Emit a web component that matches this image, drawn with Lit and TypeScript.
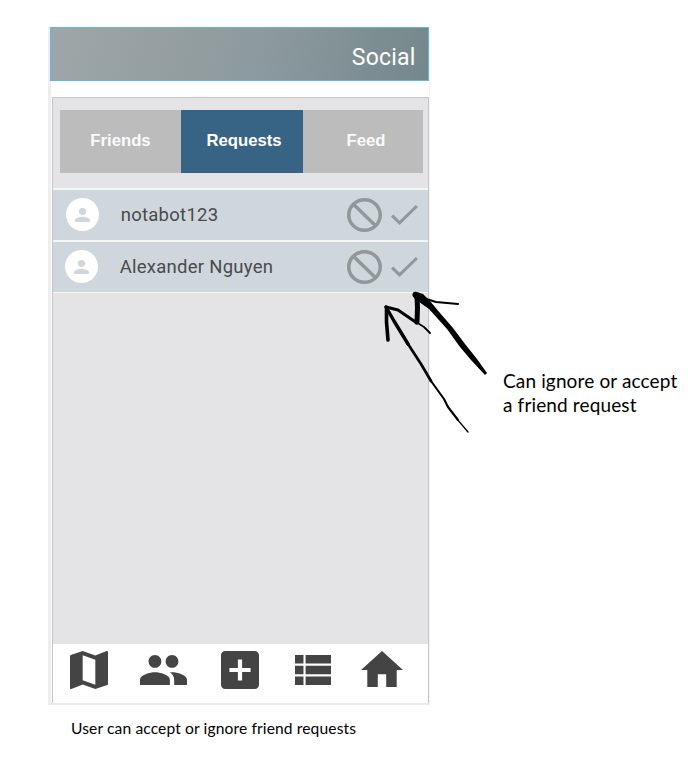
import { LitElement, html, css, svg } from "lit";
import { customElement, property } from "lit/decorators.js";

interface Glyph { box: string; d: string; }

const GLYPHS: Record<string, Glyph> = {
  map: { box: "3 3 18 18", d: "M20.5 3l-.16.03L15 5.1 9 3 3.36 4.9c-.21.07-.36.25-.36.48V20.5c0 .28.22.5.5.5l.16-.03L9 18.9l6 2.1 5.64-1.9c.21-.07.36-.25.36-.48V3.5c0-.28-.22-.5-.5-.5zM15 19l-6-2.11V5l6 2.11V19z" },
  people: { box: "1 5 22 14", d: "M16 11c1.66 0 2.99-1.34 2.99-3S17.66 5 16 5c-1.66 0-3 1.34-3 3s1.34 3 3 3zm-8 0c1.66 0 2.99-1.34 2.99-3S9.66 5 8 5C6.34 5 5 6.34 5 8s1.34 3 3 3zm0 2c-2.33 0-7 1.17-7 3.5V19h14v-2.5c0-2.33-4.67-3.5-7-3.5zm8 0c-.29 0-.62.02-.97.05 1.16.84 1.97 1.97 1.97 3.45V19h6v-2.5c0-2.33-4.67-3.5-7-3.5z" },
  add: { box: "3 3 18 18", d: "M19 3H5c-1.11 0-2 .9-2 2v14c0 1.1.89 2 2 2h14c1.1 0 2-.9 2-2V5c0-1.1-.9-2-2-2zm-2 10h-4v4h-2v-4H7v-2h4V7h2v4h4v2z" },
  list: { box: "4 5 17 14", d: "M4 14h4v-4H4v4zm0 5h4v-4H4v4zM4 9h4V5H4v4zm5 5h12v-4H9v4zm0 5h12v-4H9v4zM9 5v4h12V5H9z" },
  home: { box: "2 3 20 17", d: "M10 20v-6h4v6h5v-8h3L12 3 2 12h3v8z" },
  person: { box: "4 4 16 16", d: "M12 12c2.21 0 4-1.79 4-4s-1.79-4-4-4-4 1.79-4 4 1.79 4 4 4zm0 2c-2.67 0-8 1.34-8 4v2h16v-2c0-2.66-5.33-4-8-4z" },
  block: { box: "2 2 20 20", d: "M12 2C6.48 2 2 6.48 2 12s4.48 10 10 10 10-4.48 10-10S17.52 2 12 2zM4 12c0-4.42 3.58-8 8-8 1.85 0 3.55.63 4.9 1.69L5.69 16.9C4.63 15.55 4 13.85 4 12zm8 8c-1.85 0-3.55-.63-4.9-1.69L18.31 7.1C19.37 8.45 20 10.15 20 12c0 4.42-3.58 8-8 8z" },
  check: { box: "3.4 5.59 17.6 13.41", d: "M9 16.17L4.83 12l-1.42 1.41L9 19 21 7l-1.41-1.41z" },
};

const glyph = (name: string) => html`<svg class="glyph ${name}" viewBox=${GLYPHS[name].box} preserveAspectRatio="none">
  ${svg`<path d=${GLYPHS[name].d}></path>`}</svg>`;

@customElement("request-row")
export class RequestRow extends LitElement {
  @property() name = "";

  static styles = css`
    :host { display: flex; align-items: center; box-sizing: border-box; height: 52px;
      border-top: 2px solid #f4f6f6; background: #cfd7dc; padding: 0 10px 1px 13px;
      font-family: Roboto, sans-serif; }
    .avatar { width: 33px; height: 33px; border-radius: 50%; background: #fff;
      display: flex; align-items: center; justify-content: center; }
    .glyph { display: block; flex: none; }
    .person { width: 15px; height: 14px; fill: #cfd7dc; }
    .label { flex: 1; margin-left: 21.7px; font-size: 18.5px; line-height: 21px; height: 20px;
      letter-spacing: .26px; overflow: hidden; color: #484b4d; white-space: nowrap; }
    .block { width: 35px; height: 34px; fill: #929799; transform: scaleX(-1); }
    .check { width: 27px; height: 20px; margin-left: 9px; fill: #929799; }
  `;

  render() {
    return html`<div class="avatar">${glyph("person")}</div>
      <div class="label">${this.name}</div>${glyph("block")}${glyph("check")}`;
  }
}

@customElement("app-root")
export class AppRoot extends LitElement {
  static styles = css`
    :host { display: block; position: relative; width: 690px; height: 782px; overflow: hidden; background: #fff; }
    * { box-sizing: border-box; }
    .page { display: flex; padding: 27px 0 0 48px; }
    .phone { width: 382px; height: 678px; flex: none; display: flex; flex-direction: column;
      border-left: 3px solid #eee; border-bottom: 2px solid #eaeaec; border-right: 1px solid #f4f4f5; }
    .header { height: 54px; margin: 0 0 0 -1px; border: 1px solid #63b4ee; flex: none;
      background: linear-gradient(105deg, #9ea6a8 0%, #929d9f 40%, #8b999e 58%, #74878b 100%);
      display: flex; align-items: center; justify-content: flex-end; padding: 8px 12.5px 0 0;
      color: #fff; font: 23px/28px Roboto, sans-serif; letter-spacing: .2px; }
    .panel { margin-top: 16px; flex: 1; margin-left: 1px; border: 1px solid #c4c5c9; border-bottom: 0;
      background: #e4e4e6; display: flex; flex-direction: column; }
    .tabs { display: grid; grid-template-columns: 121px 122px 120px; height: 63px; margin: 12px 5px 0 7px; flex: none; }
    .tab { display: flex; align-items: center; justify-content: center; padding-bottom: 1px;
      background: #bcbcbc; color: #fafafa; font: bold 16.7px/20px "Liberation Sans", Arial, sans-serif; }
    .tab.active { background: #376485; color: #fff; padding-left: 4px; }
    .tab.active + .tab { padding-left: 6px; }
    .rows { margin-top: 15px; border-bottom: 1px solid #f6f8f8; }
    .second { padding-left: 12px; }
    .nav { margin-top: auto; height: 59px; background: #fff; display: flex; align-items: center;
      padding: 0 0 8px 17px; }
    .glyph { display: block; fill: #444; flex: none; }
    .map { width: 38px; height: 38px; }
    .people { width: 47px; height: 30px; margin-left: 32px; }
    .add { width: 38px; height: 38px; margin-left: 34px; }
    .list { width: 36px; height: 30px; margin-left: 36px; }
    .home { width: 42px; height: 36px; margin: 0 0 2px 30px; }
    .note { margin: 342px 0 0 73px; font: 19px/24px Lato, sans-serif; letter-spacing: .14px; color: #000; white-space: nowrap; }
    .caption { margin: 13px 0 0 71px; font: 15.6px/20px Lato, sans-serif; letter-spacing: .12px; color: #000; white-space: nowrap; }
    .ink { position: absolute; left: 0; top: 0; width: 690px; height: 782px; pointer-events: none; }
    .stroke { fill: none; stroke: #000; stroke-linecap: round; stroke-linejoin: round; }
  `;

  render() {
    return html`
      <div class="page">
        <div class="phone">
          <div class="header">Social</div>
          <div class="panel">
            <div class="tabs">
              <div class="tab">Friends</div>
              <div class="tab active">Requests</div>
              <div class="tab">Feed</div>
            </div>
            <div class="rows">
              <request-row name="notabot123"></request-row>
              <request-row class="second" name="Alexander Nguyen"></request-row>
            </div>
            <div class="nav">${["map", "people", "add", "list", "home"].map(glyph)}</div>
          </div>
        </div>
        <div class="note">Can ignore or accept<br />a friend request</div>
      </div>
      <div class="caption">User can accept or ignore friend requests</div>
      <svg class="ink" viewBox="0 0 690 782">
        <path class="stroke" stroke-width="3.6" d="M386.500 308L386.500 322L388 340"></path>
        <path class="stroke" stroke-width="3" d="M386 307L398 310L417 323"></path>
        <path class="stroke" stroke-width="1.8" d="M416 322L424 327L430 333"></path>
        <path class="stroke" stroke-width="3.400" d="M386 307L394 321L408 344"></path>
        <path class="stroke" stroke-width="2.700" d="M408 344L421 364L431 381"></path>
        <path class="stroke" stroke-width="2.100" d="M431 381L444 399L448 407L458 420"></path>
        <path class="stroke" stroke-width="1.300" d="M457 419L468 432"></path>
        <path class="stroke" stroke-width="5" d="M417 296L417.500 308L417 322"></path>
        <path d="M412.500 296Q412 291 417 292L423 294L430 301L440 313L453 328L465 344L477 359L487 373L485 375L471 360L460 347L447 329L429 309L415 299Z"></path>
        <path class="stroke" stroke-width="2.200" d="M420 297L436 302L447 303L458 304"></path>
      </svg>`;
  }
}
